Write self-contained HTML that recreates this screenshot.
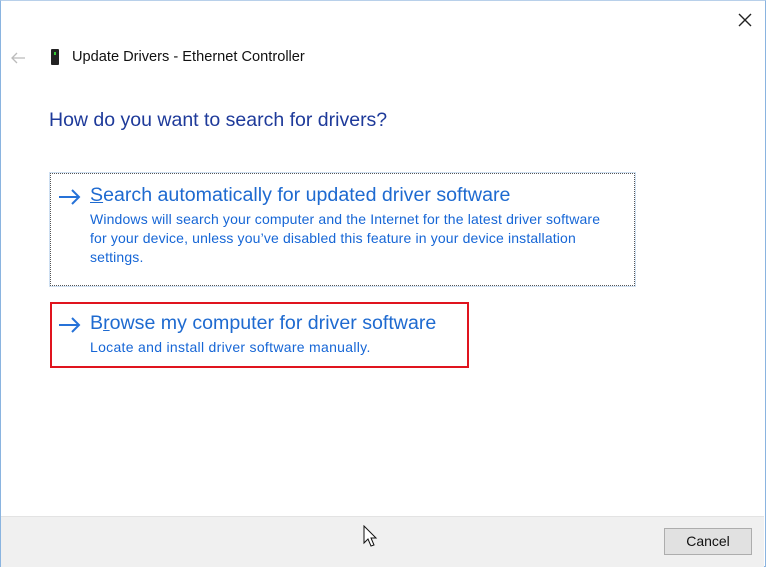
<!DOCTYPE html><html><head><style>
body{margin:0;width:768px;height:567px;overflow:hidden;background:#fff;font-family:"Liberation Sans",sans-serif;position:relative}
.a{position:absolute;white-space:nowrap}
</style></head><body>
<div class="a" style="left:0;top:0;width:764px;height:565px;border:1px solid #8ab4e0;border-top-color:#b8d0ea"></div>
<div class="a" style="left:1px;top:516px;width:763px;height:50px;background:#f0f0f0;border-top:1px solid #e3e3e3"></div>
<svg class="a" style="left:738px;top:13px" width="14" height="14"><path d="M1 1L13 13M13 1L1 13" stroke="#222" stroke-width="1.4"/></svg>
<svg class="a" style="left:10px;top:52px" width="16" height="12"><path d="M15 6H2M7 1L2 6L7 11" stroke="#bbb" stroke-width="1.3" fill="none"/></svg>
<div class="a" style="left:51px;top:49px;width:8px;height:16px;background:#222;border-radius:1px"></div>
<div class="a" style="left:54px;top:52px;width:2px;height:3px;background:#3c3"></div>
<div class="a" style="left:72px;top:49px;font-size:14.6px;color:#111">Update Drivers - Ethernet Controller</div>
<div class="a" style="left:49px;top:109px;font-size:19.5px;color:#1e3a9a">How do you want to search for drivers?</div>
<div class="a" style="left:50px;top:173px;width:583px;height:111px;border:1px dotted #555;outline:1px solid #cfe0f2"></div>
<svg class="a" style="left:58px;top:189px" width="24" height="16"><path d="M1 8H21M14 1L21 8L14 15" stroke="#2672d8" stroke-width="2" fill="none"/></svg>
<div class="a" style="left:90px;top:184px;font-size:19.6px;color:#1e6ad0"><u>S</u>earch automatically for updated driver software</div>
<div class="a" style="left:90px;top:210px;font-size:14px;letter-spacing:0.15px;line-height:19px;color:#1666d6">Windows will search your computer and the Internet for the latest driver software<br>for your device, unless you’ve disabled this feature in your device installation<br>settings.</div>
<div class="a" style="left:50px;top:302px;width:415px;height:62px;border:2px solid #e0141e"></div>
<svg class="a" style="left:58px;top:317px" width="24" height="16"><path d="M1 8H21M14 1L21 8L14 15" stroke="#2672d8" stroke-width="2" fill="none"/></svg>
<div class="a" style="left:90px;top:312px;font-size:19.6px;color:#1e6ad0">B<u>r</u>owse my computer for driver software</div>
<div class="a" style="left:90px;top:339px;font-size:14px;letter-spacing:0.3px;color:#1666d6">Locate and install driver software manually.</div>
<svg class="a" style="left:363px;top:525px" width="16" height="24"><path d="M1 1V18L5 14L8 21L11 20L8 13H13Z" fill="#fff" stroke="#111" stroke-width="1"/></svg>
<div class="a" style="left:664px;top:528px;width:86px;height:25px;background:#e1e1e1;border:1px solid #adadad;font-size:14px;line-height:25px;text-align:center;color:#111">Cancel</div>
</body></html>
